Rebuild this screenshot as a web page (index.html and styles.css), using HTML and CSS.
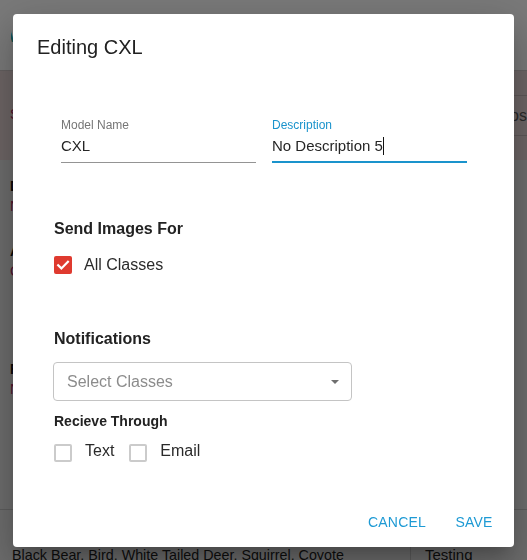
FILE: index.html
```html
<!DOCTYPE html>
<html>
<head>
<meta charset="utf-8">
<title>Editing CXL</title>
<link rel="stylesheet" href="styles.css">
</head>
<body>
<div class="page">
  <header class="topbar"><span class="brand">A</span></header>
  <div class="band">
    <div class="band-left">Settings</div>
    <div class="band-tab">Photos</div>
  </div>
  <div class="details">
    <div class="detail gap-a"><div class="dl">Description</div><div class="dv">No Description 5</div></div>
    <div class="detail gap-b"><div class="dl">Alert Classes</div><div class="dv">Coyote</div></div>
    <div class="detail"><div class="dl">Frequency</div><div class="dv">None</div></div>
  </div>
  <div class="table-row">
    <div class="cell cell-classes">Black Bear, Bird, White Tailed Deer, Squirrel, Coyote</div>
    <div class="cell cell-status">Testing</div>
  </div>
</div>
<div class="backdrop"></div>
<div class="dialog">
  <h2 class="title">Editing CXL</h2>
  <div class="fields">
    <div class="field">
      <div class="field-label">Model Name</div>
      <div class="field-input">CXL</div>
    </div>
    <div class="field focused">
      <div class="field-label">Description</div>
      <div class="field-input">No Description 5<span class="caret"></span></div>
    </div>
  </div>
  <div class="section">
    <div class="section-title first">Send Images For</div>
    <div class="check-row">
      <span class="checkbox checked"><svg viewBox="0 0 18 18" width="18" height="18"><path d="M4.2 9.2l3.2 3.2L13.9 5.8" fill="none" stroke="#fff" stroke-width="2.2" stroke-linecap="square"/></svg></span>
      <span class="check-label">All Classes</span>
    </div>
    <div class="section-title notif">Notifications</div>
    <div class="select">
      <span class="placeholder">Select Classes</span>
      <svg class="arrow" viewBox="0 0 8 4" width="8" height="4"><path d="M0 0h8L4 4z" fill="#6f6f6f"/></svg>
    </div>
    <div class="sub-title">Recieve Through</div>
    <div class="options">
      <div class="option"><span class="checkbox"></span><span class="option-label">Text</span></div>
      <div class="option"><span class="checkbox"></span><span class="option-label">Email</span></div>
    </div>
  </div>
  <div class="actions">
    <button class="btn">Cancel</button>
    <button class="btn">Save</button>
  </div>
</div>
</body>
</html>
```
FILE: styles.css
```css
html, body {
  margin: 0;
  padding: 0;
}
body {
  width: 527px;
  height: 560px;
  overflow: hidden;
  background: #dcdcdc;
  font-family: "Liberation Sans", Arial, sans-serif;
  position: relative;
}
.page {
  height: 560px;
  overflow: hidden;
}
.topbar {
  height: 70px;
  background: #f5f5f5;
  display: flex;
  align-items: flex-start;
}
.brand {
  margin: 27px 0 0 3px;
  font-size: 16px;
  line-height: 20px;
  font-weight: 700;
  color: #2aa6a6;
  clip-path: inset(0 0 0 8px);
}
.band {
  height: 89px;
  border-top: 1px solid #c8c0c0;
  background: #ddcccc;
  display: flex;
  justify-content: space-between;
  align-items: flex-start;
}
.band-left {
  padding: 33px 0 0 10px;
  font-size: 14px;
  line-height: 20px;
  color: #a4285c;
}
.band-tab {
  margin-top: 24px;
  width: 120px;
  height: 39px;
  border-top: 1px solid #bcb0b0;
  border-bottom: 1px solid #bcb0b0;
  font-size: 16px;
  line-height: 39px;
  text-align: right;
  color: #555;
}
.details {
  padding: 16px 0 0 10px;
  height: 349px;
  box-sizing: border-box;
  font-size: 14px;
  line-height: 20px;
}
.dl {
  font-weight: 700;
  color: #111;
}
.dv {
  color: #a4285c;
}
.gap-a { margin-bottom: 25px; }
.gap-b { margin-bottom: 78px; }
.table-row {
  display: flex;
  border-top: 1px solid #bdbdbd;
  height: 60px;
}
.cell {
  font-size: 14.3px;
  line-height: 20px;
  padding-top: 35px;
  color: #1c1c1c;
  white-space: nowrap;
}
.cell-classes {
  width: 398px;
  padding-left: 12px;
}
.cell-status {
  border-left: 1px solid #bdbdbd;
  padding-left: 14px;
  font-size: 15px;
}
.backdrop {
  position: fixed;
  inset: 0;
  background: rgba(0, 0, 0, 0.5);
}
.dialog {
  position: absolute;
  left: 13px;
  top: 14px;
  width: 501px;
  height: 533px;
  background: #fff;
  border-radius: 4px;
  box-shadow: 0 11px 15px -7px rgba(0,0,0,0.2), 0 24px 38px 3px rgba(0,0,0,0.14), 0 9px 46px 8px rgba(0,0,0,0.12);
  display: flex;
  flex-direction: column;
  color: #212121;
}
.title {
  margin: 17px 0 0;
  padding: 0 24px;
  font-size: 20px;
  line-height: 32px;
  font-weight: 400;
  color: #212121;
}
.fields {
  display: flex;
  gap: 16px;
  margin-top: 55px;
  padding-left: 48px;
}
.field {
  width: 195px;
}
.field-label {
  font-size: 12px;
  line-height: 14px;
  color: #767676;
  margin-bottom: 4px;
}
.field-input {
  font-size: 15px;
  line-height: 20px;
  color: #262626;
  padding-bottom: 6px;
  border-bottom: 1px solid #949494;
}
.field.focused .field-label {
  color: #1a93cc;
}
.field.focused .field-input {
  padding-bottom: 5px;
  border-bottom: 2px solid #1a93cc;
}
.caret {
  display: inline-block;
  width: 1px;
  height: 18px;
  background: #111;
  vertical-align: -4px;
}
.section {
  padding-left: 41px;
}
.section-title {
  font-size: 16px;
  line-height: 24px;
  font-weight: 700;
  color: #222;
}
.section-title.first {
  margin-top: 54px;
}
.section-title.notif {
  margin-top: 50px;
}
.check-row {
  display: flex;
  align-items: center;
  gap: 12px;
  height: 24px;
  margin-top: 12px;
}
.checkbox {
  display: block;
  flex: none;
  width: 18px;
  height: 18px;
  box-sizing: border-box;
  border-radius: 2px;
  border: 2px solid #cbcbcb;
}
.checkbox.checked {
  border: 0;
  background: #df3a2f;
}
.checkbox svg {
  display: block;
}
.check-label, .option-label {
  font-size: 16px;
  line-height: 24px;
  color: #2a2a2a;
}
.select {
  margin: 11px 0 0 -1px;
  width: 299px;
  height: 39px;
  box-sizing: border-box;
  border: 1px solid #c4c4c4;
  border-radius: 4px;
  display: flex;
  align-items: center;
  justify-content: space-between;
  padding: 0 12px 0 13px;
}
.placeholder {
  font-size: 16px;
  line-height: 24px;
  color: #8c8c8c;
}
.arrow {
  display: block;
}
.sub-title {
  margin-top: 10px;
  font-size: 14px;
  line-height: 20px;
  font-weight: 700;
  color: #222;
}
.options {
  display: flex;
  gap: 15px;
  margin-top: 8px;
}
.option {
  display: flex;
  align-items: flex-start;
}
.option .checkbox {
  margin-top: 5px;
}
.option-label {
  margin-left: 13px;
}
.actions {
  margin-top: auto;
  display: flex;
  justify-content: flex-end;
  gap: 8px;
  padding: 8px 8px 7px;
}
.btn {
  font-family: "Liberation Sans", Arial, sans-serif;
  font-size: 14px;
  line-height: 24px;
  padding: 6px 8px;
  min-width: 64px;
  box-sizing: border-box;
  border: 0;
  background: none;
  color: #1e9ad4;
  text-transform: uppercase;
  letter-spacing: 0.2px;
  text-align: center;
}
```
